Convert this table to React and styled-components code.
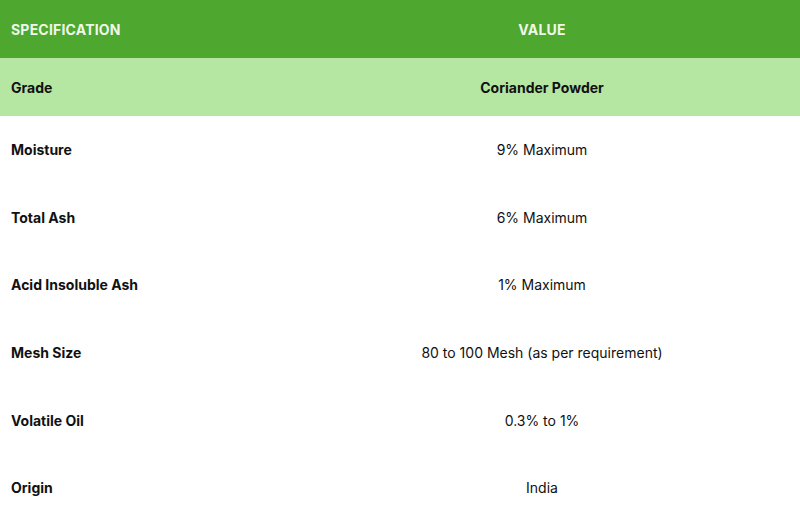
import React from 'react';
import styled, { createGlobalStyle } from 'styled-components';

const GlobalStyle = createGlobalStyle`
  html, body {
    margin: 0;
    padding: 0;
    background: #ffffff;
  }
  body {
    font-family: Inter, "Noto Sans", sans-serif;
    color: #111111;
  }
`;

const Table = styled.div`
  display: grid;
  grid-template-columns: 284px 1fr;
  width: 800px;
`;

const Row = styled.div`
  display: contents;
`;

const Cell = styled.div`
  display: flex;
  align-items: center;
  justify-content: ${(p) => (p.$center ? 'center' : 'flex-start')};
  height: ${(p) => p.$height}px;
  padding: 0 11px;
  background: ${(p) => p.$bg};
  color: ${(p) => p.$color || '#111111'};
  font-size: 14px;
  font-weight: ${(p) => (p.$bold ? 700 : 400)};
  letter-spacing: ${(p) => (p.$caps ? '0.2px' : '0')};
`;

const rows = [
  ['Moisture', '9% Maximum'],
  ['Total Ash', '6% Maximum'],
  ['Acid Insoluble Ash', '1% Maximum'],
  ['Mesh Size', '80 to 100 Mesh (as per requirement)'],
  ['Volatile Oil', '0.3% to 1%'],
  ['Origin', 'India'],
];

export default function App() {
  return (
    <>
      <GlobalStyle />
      <Table>
        <Row>
          <Cell $height={58} $bg="#4ea72e" $color="#eef8ea" $bold $caps>
            SPECIFICATION
          </Cell>
          <Cell $height={58} $bg="#4ea72e" $color="#eef8ea" $bold $caps $center>
            VALUE
          </Cell>
        </Row>
        <Row>
          <Cell $height={58} $bg="#b5e6a2" $bold>
            Grade
          </Cell>
          <Cell $height={58} $bg="#b5e6a2" $bold $center>
            Coriander Powder
          </Cell>
        </Row>
        {rows.map(([spec, value]) => (
          <Row key={spec}>
            <Cell $height={67.6} $bg="#ffffff" $bold>
              {spec}
            </Cell>
            <Cell $height={67.6} $bg="#ffffff" $center>
              {value}
            </Cell>
          </Row>
        ))}
      </Table>
    </>
  );
}
